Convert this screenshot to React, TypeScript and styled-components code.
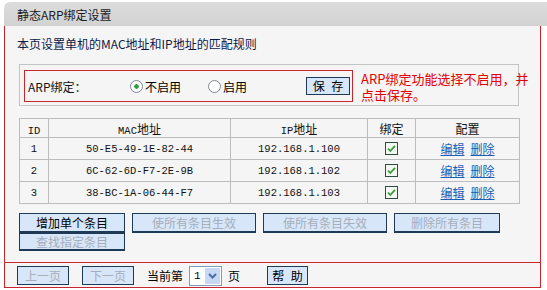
import styled, { createGlobalStyle } from "styled-components"

const GlobalStyle = createGlobalStyle`
  body {
    margin: 0;
    background: #fff;
    font-family: "Noto Sans CJK SC", "Liberation Sans", sans-serif;
    font-size: 12px;
    color: #000;
  }
`

const Page = styled.div`
  width: 547px;
  height: 290px;
  box-sizing: border-box;
  padding: 2px 0 0 4px;
`

const Header = styled.div`
  height: 24px;
  display: flex;
  align-items: center;
  padding-left: 13px;
  background: linear-gradient(#dcdcdc, #d2d2d2);
  border-top-left-radius: 6px;
  color: #1a1a1a;
  font-size: 12px;
`

const Panel = styled.div`
  width: 537px;
  box-sizing: border-box;
  border: 1px solid #c8262c;
  border-top: none;
  background: #f5f5f5;
`

const Intro = styled.div`
  padding: 9px 0 0 12px;
  height: 18px;
  line-height: 18px;
  color: #0c1a4a;
`

const Section = styled.div`
  margin: 11px 0 0 14px;
  width: 500px;
  height: 42px;
  box-sizing: border-box;
  border: 1px solid #c4c4c4;
  padding: 5px 4px;
  display: flex;
  align-items: flex-start;
`

const RedBox = styled.div`
  flex-shrink: 0;
  width: 329px;
  height: 32px;
  box-sizing: border-box;
  border: 1px solid #c8262c;
  display: grid;
  grid-template-columns: 102px 78px 98px 44px;
  align-items: center;
  padding-left: 3px;
`

const Label = styled.span`
  color: #111;
`

const RadioOption = styled.label`
  display: flex;
  align-items: center;
  gap: 2px;
`

const RadioDot = styled.span<{ $on?: boolean }>`
  width: 11px;
  height: 11px;
  border-radius: 50%;
  border: 1px solid #7d8c9c;
  background: radial-gradient(circle, ${(p) => (p.$on ? "#2f9f3a 0 2px, #fff 2.5px" : "#fff 0")});
  box-sizing: content-box;
`

const Button = styled.button<{ $off?: boolean }>`
  font-family: "Noto Sans CJK SC", sans-serif;
  font-size: 12px;
  padding: 0;
  height: 20px;
  background: #d7e6f8;
  border: 1px solid #1f3a56;
  color: ${(p) => (p.$off ? "#a6aebb" : "#000")};
`

const SaveButton = styled(Button)`
  width: 44px;
  height: 18px;
  line-height: 14px;
  word-spacing: 4px;
`

const Hint = styled.div`
  flex-shrink: 0;
  margin: 1px 0 0 8px;
  width: 175px;
  color: #e40000;
  font-size: 13px;
  line-height: 16px;
`

const Table = styled.table`
  margin: 12px 0 0 14px;
  width: 500px;
  border-collapse: collapse;
  table-layout: fixed;
`

const Cell = styled.td`
  border: 1px solid #bcbcbc;
  height: 21px;
  padding: 0;
  text-align: center;
  font-family: "Liberation Mono", "Noto Sans CJK SC", monospace;
  font-size: 10.5px;
  color: #111;
`

const HeadCell = styled.th`
  border: 1px solid #bcbcbc;
  height: 18px;
  padding: 0;
  font-weight: normal;
  font-size: 12px;
  color: #111;
`

const Mono = styled.span`
  font-family: "Liberation Mono", monospace;
  font-size: 10.5px;
`

const Links = styled.span`
  display: inline-flex;
  gap: 6px;
  font-family: "Noto Sans CJK SC", sans-serif;
  font-size: 12px;
`

const Link = styled.a`
  color: #1a5fb4;
  text-decoration: underline;
`

const Check = () => (
  <svg width="13" height="13" viewBox="0 0 13 13" style={{ verticalAlign: "middle" }}>
    <rect x="0.5" y="0.5" width="12" height="12" fill="#f4f8f2" stroke="#2b4d3f" />
    <path d="M3 6.5 L5.3 9 L10 3.8" fill="none" stroke="#3a9b3a" strokeWidth="1.8" />
  </svg>
)

const Actions = styled.div`
  margin: 9px 0 0 14px;
  display: grid;
  grid-template-columns: 106px 124px 124px 106px;
  column-gap: 7px;
  width: 480px;
`

const ActionButton = styled(Button)<{ $low?: boolean }>`
  height: ${(p) => (p.$low ? "18px" : "20px")};
  line-height: 16px;
  border-bottom-width: 2px;
`

const Footer = styled.div`
  margin-top: 11px;
  border-top: 1px solid #c8262c;
  height: 25px;
  display: flex;
  align-items: center;
  padding: 1px 0 0 12px;
  box-sizing: border-box;
`

const PageButton = styled(Button)`
  width: 52px;
  height: 19px;
  line-height: 15px;
  margin-right: 13px;
`

const HelpButton = styled(Button)`
  width: 41px;
  height: 19px;
  line-height: 15px;
  margin-left: 27px;
  word-spacing: 4px;
`

const Select = styled.div`
  margin: 0 6px;
  width: 33px;
  height: 20px;
  box-sizing: border-box;
  border: 1px solid #7f9db9;
  background: #fff;
  display: flex;
  align-items: center;
  justify-content: space-between;
  padding: 0 1px 0 4px;
  font-family: "Liberation Mono", monospace;
  font-size: 11px;
`

const Chevron = () => (
  <svg width="15" height="16" viewBox="0 0 15 16">
    <rect x="0" y="0" width="15" height="16" rx="1" fill="#c6d8f4" />
    <path d="M4 6 L7.5 9.5 L11 6" fill="none" stroke="#4d6fa8" strokeWidth="2" />
  </svg>
)

const rows = [
  { id: 1, mac: "50-E5-49-1E-82-44", ip: "192.168.1.100" },
  { id: 2, mac: "6C-62-6D-F7-2E-9B", ip: "192.168.1.102" },
  { id: 3, mac: "38-BC-1A-06-44-F7", ip: "192.168.1.103" },
]

export default function App() {
  return (
    <Page>
      <GlobalStyle />
      <Header>静态ARP绑定设置</Header>
      <Panel>
        <Intro>本页设置单机的MAC地址和IP地址的匹配规则</Intro>
        <Section>
          <RedBox>
            <Label>ARP绑定：</Label>
            <RadioOption>
              <RadioDot $on />
              不启用
            </RadioOption>
            <RadioOption>
              <RadioDot />
              启用
            </RadioOption>
            <SaveButton>保 存</SaveButton>
          </RedBox>
          <Hint>ARP绑定功能选择不启用，并点击保存。</Hint>
        </Section>
        <Table>
          <colgroup>
            <col style={{ width: 29 }} />
            <col style={{ width: 182 }} />
            <col style={{ width: 137 }} />
            <col style={{ width: 48 }} />
            <col style={{ width: 104 }} />
          </colgroup>
          <thead>
            <tr>
              <HeadCell><Mono>ID</Mono></HeadCell>
              <HeadCell><Mono>MAC</Mono>地址</HeadCell>
              <HeadCell><Mono>IP</Mono>地址</HeadCell>
              <HeadCell>绑定</HeadCell>
              <HeadCell>配置</HeadCell>
            </tr>
          </thead>
          <tbody>
            {rows.map((r) => (
              <tr key={r.id}>
                <Cell>{r.id}</Cell>
                <Cell>{r.mac}</Cell>
                <Cell>{r.ip}</Cell>
                <Cell><Check /></Cell>
                <Cell>
                  <Links>
                    <Link>编辑</Link>
                    <Link>删除</Link>
                  </Links>
                </Cell>
              </tr>
            ))}
          </tbody>
        </Table>
        <Actions>
          <ActionButton>增加单个条目</ActionButton>
          <ActionButton $off>使所有条目生效</ActionButton>
          <ActionButton $off>使所有条目失效</ActionButton>
          <ActionButton $off>删除所有条目</ActionButton>
          <ActionButton $off $low>查找指定条目</ActionButton>
        </Actions>
        <Footer>
          <PageButton $off>上一页</PageButton>
          <PageButton $off>下一页</PageButton>
          <span>当前第</span>
          <Select>
            1
            <Chevron />
          </Select>
          <span>页</span>
          <HelpButton>帮 助</HelpButton>
        </Footer>
      </Panel>
    </Page>
  )
}
